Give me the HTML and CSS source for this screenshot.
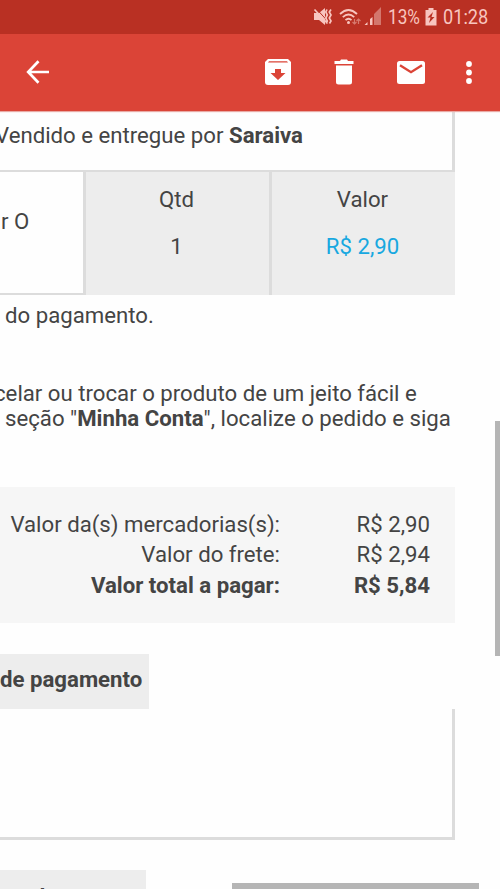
FILE: index.html
```html
<!DOCTYPE html>
<html lang="pt-BR">
<head>
<meta charset="utf-8">
<title>Pedido</title>
<link rel="stylesheet" href="styles.css">
</head>
<body>
<div class="screen">
  <header class="status">
    <svg class="status-icons" width="75" height="20" viewBox="313 7 75 20" fill="#f8c5bf">
      <path d="M314 13h5l6-5v17l-6-5h-5z"/>
      <path d="M316.500 9l12 13" stroke="#b93023" stroke-width="1"/>
      <path d="M314.500 9.500l13 14M327 9.500l-1.200 2.500 1.500 3-1.500 3 1.500 3-1 2.500M331 9.500l-1.700 2.500 1.700 3-1.700 3 1.700 3-1.500 2.500" fill="none" stroke="#f8c5bf" stroke-width="1.700"/>
      <path d="M340 14q8.500-8 17 0M342.800 17.200q5.700-5.500 11.400 0M345.500 20.200q3-3 6 0" fill="none" stroke="#f8c5bf" stroke-width="1.800"/>
      <circle cx="348.500" cy="22.500" r="1.500"/>
      <path d="M354.500 19v5M352.500 22l2 2 2-2M358.500 24v-5M356.500 21l2-2 2 2" fill="none" stroke="#d77a6f" stroke-width="1.200"/>
      <path d="M364.500 25l3-3v3zM370 19l2.500-2v8H370z"/>
      <path d="M374 14l2.500-2.500V25H374zM376.500 11.500L381 7v18h-4.500z" fill="#d3776d"/>
    </svg>
    <span class="percent">13%</span>
    <svg class="battery" width="12" height="18" viewBox="0 0 12 18">
      <path fill="#f8c5bf" d="M3.500 0h5v2H11.500v15.500H.5V2h3z"/>
      <path fill="#b93023" d="M8 4L2.500 9.500h3L4 15l5.500-6h-3z"/>
    </svg>
    <span class="clock">01:28</span>
  </header>
  <nav class="toolbar">
    <svg class="back" width="24" height="24" viewBox="0 0 24 24" fill="none" stroke="#fff" stroke-width="2.700"><path d="M12.500 1.300L2.200 12l10.300 10.700M2.200 12H23"/></svg>
    <svg class="archive" width="26" height="26" viewBox="0 0 26 26"><path fill="#fff" d="M3 0h20l3 3v20q0 3-3 3H3q-3 0-3-3V3z"/><path fill="#db4437" d="M3 3.500L4 2.200h18l1 1.300zM10 10h6v4h4.500L13 21l-7.500-7H10z"/></svg>
    <svg class="trash" width="20" height="26" viewBox="0 0 20 26" fill="#fff"><path d="M.5 2H6L7 .5h6L14 2h5.500v3H.5zM2 6.500h16V23q0 2.500-2.500 2.500h-11Q2 25.500 2 23z"/></svg>
    <svg class="mail" width="28" height="23" viewBox="0 0 28 23"><rect width="28" height="23" rx="2.500" fill="#fff"/><path d="M3 4.200l11 7 11-7" fill="none" stroke="#db4437" stroke-width="2.400"/></svg>
    <svg class="more" width="6" height="23" viewBox="0 0 6 23" fill="#fff"><circle cx="3" cy="3" r="2.900"/><circle cx="3" cy="11.500" r="2.900"/><circle cx="3" cy="20" r="2.900"/></svg>
  </nav>
  <main>
    <section class="seller"><span class="seller-text">Vendido e entregue por <b>Saraiva</b></span></section>
    <section class="item">
      <div class="product">r O</div>
      <div class="cell qty"><span>Qtd</span><span>1</span></div>
      <div class="cell"><span>Valor</span><span class="price">R$ 2,90</span></div>
    </section>
    <p class="note">do pagamento.</p>
    <p class="help"><span class="line first">celar ou trocar o produto de um jeito fácil e</span><span class="line">seção "<b>Minha Conta</b>", localize o pedido e siga</span></p>
    <section class="totals">
      <div class="row"><span>Valor da(s) mercadorias(s):</span><span>R$ 2,90</span></div>
      <div class="row"><span>Valor do frete:</span><span>R$ 2,94</span></div>
      <div class="row strong"><span>Valor total a pagar:</span><span>R$ 5,84</span></div>
    </section>
    <h2 class="tab">de pagamento</h2>
    <section class="payment"></section>
    <h2 class="tab next">de entrega</h2>
  </main>
  <div class="scroll-v"></div>
  <div class="scroll-h"></div>
</div>
</body>
</html>
```
FILE: styles.css
```css
* { box-sizing: border-box; }
body { margin: 0; background: #fefefe; font-family: Roboto, sans-serif; color: #444; }
.screen { position: relative; width: 500px; height: 889px; overflow: hidden; font-size: 22.200px; line-height: 25px; }
.status { height: 34px; padding-right: 11px; background: #b93023; color: #f8c5bf; display: flex; align-items: center; justify-content: flex-end; font-size: 20px; }
.status-icons { flex: none; }
.percent { width: 33px; display: flex; transform: scaleX(.86); transform-origin: left; }
.battery { margin: 0 6px 0 4px; }
.clock { width: 46px; transform: scaleX(.91); transform-origin: left; }
.toolbar { height: 77px; background: #db4437; display: flex; align-items: center; padding: 0 27px 1px 26px; box-shadow: 0 1px 1px #e9aaa5; position: relative; }
.archive { margin-left: 215px; }
.trash { margin-left: 43px; }
.mail { margin-left: 43px; }
.more { margin-left: 41px; }
.seller { width: 455px; height: 61px; padding-top: 12px; border: solid #dcdcdc; border-width: 0 3px 2px 0; white-space: nowrap; }
.seller-text { display: block; margin-left: -5px; }
.item { width: 455px; height: 123px; display: grid; grid-template-columns: 86px 186px 183px; background: #ededed; }
.product { background: #fefefe; border: solid #dcdcdc; border-width: 0 3px 2px 0; padding: 37px 0 0 1px; }
.cell { display: flex; flex-direction: column; align-items: center; gap: 22px; padding: 15px 2px 0 0; }
.qty { border-right: 3px solid #dcdcdc; }
.price { color: #18a8e0; }
.note { margin: 8px 0 0 5px; }
.help { margin: 53px 0 0; white-space: nowrap; }
.line { display: block; margin-left: 5px; }
.first { margin-left: -6px; }
.totals { width: 455px; height: 136px; margin-top: 56px; padding: 21.600px 25px 0 0; background: #f6f6f6; line-height: 30.700px; }
.row { display: grid; grid-template-columns: 280px 150px; text-align: right; }
.strong, b { font-weight: 700; }
.tab { width: 149px; height: 55px; margin: 31px 0 0; padding-top: 13px; background: #ededed; font-size: 22.200px; font-weight: 700; white-space: nowrap; }
.payment { width: 455px; height: 131px; border: solid #dcdcdc; border-width: 0 3px 3px 0; }
.next { width: 146px; margin-top: 30px; padding: 15px 7px 0 0; text-align: right; }
.scroll-v { position: absolute; right: 0; top: 421px; width: 5px; height: 235px; background: #b5b5b5; }
.scroll-h { position: absolute; left: 232px; bottom: 0; width: 247px; height: 6px; background: #b5b5b5; }
```
